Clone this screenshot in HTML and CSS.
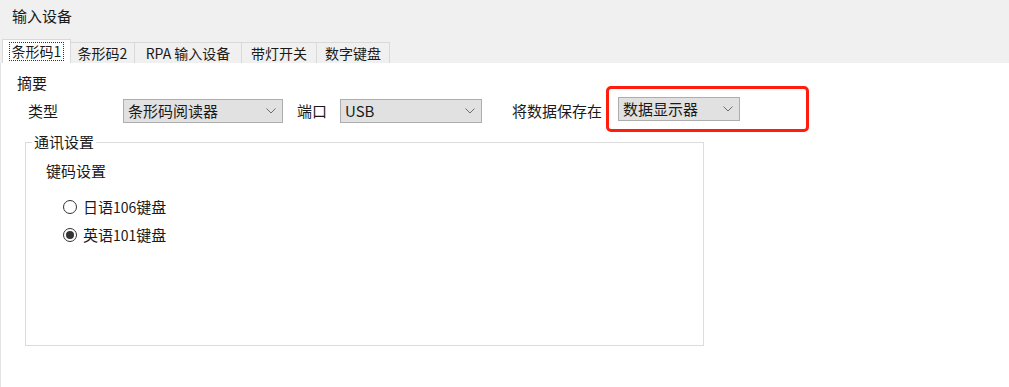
FILE: index.html
```html
<!DOCTYPE html>
<html lang="zh-CN">
<head>
<meta charset="utf-8">
<title>输入设备</title>
<link rel="stylesheet" href="styles.css">
</head>
<body>
<div class="window">
  <div class="header">
    <div class="title">输入设备</div>
    <div class="tabs">
      <div class="tab tab-active t1"><span class="focus">条形码1</span></div>
      <div class="tab t2">条形码2</div>
      <div class="tab t3">RPA 输入设备</div>
      <div class="tab t4">带灯开关</div>
      <div class="tab t5">数字键盘</div>
    </div>
  </div>
  <div class="panel">
    <div class="section-title">摘要</div>
    <div class="row">
      <span class="label label-type">类型</span>
      <div class="combo combo-type">
        <span class="combo-text">条形码阅读器</span>
        <svg class="chev" width="10" height="6" viewBox="0 0 10 6"><path d="M0.5 0.5 L5 5 L9.5 0.5" fill="none" stroke="#6d6d6d" stroke-width="1"/></svg>
      </div>
      <span class="label label-port">端口</span>
      <div class="combo combo-port">
        <span class="combo-text">USB</span>
        <svg class="chev" width="10" height="6" viewBox="0 0 10 6"><path d="M0.5 0.5 L5 5 L9.5 0.5" fill="none" stroke="#6d6d6d" stroke-width="1"/></svg>
      </div>
      <span class="label label-save">将数据保存在</span>
      <div class="highlight">
        <div class="combo combo-save">
          <span class="combo-text">数据显示器</span>
          <svg class="chev" width="10" height="6" viewBox="0 0 10 6"><path d="M0.5 0.5 L5 5 L9.5 0.5" fill="none" stroke="#6d6d6d" stroke-width="1"/></svg>
        </div>
      </div>
    </div>
    <fieldset class="group">
      <legend class="group-title">通讯设置</legend>
      <div class="sub-title">键码设置</div>
      <div class="radio"><span class="radio-circle"></span><span>日语<span class="num">106</span>键盘</span></div>
      <div class="radio radio-second"><span class="radio-circle radio-checked"></span><span>英语<span class="num">101</span>键盘</span></div>
    </fieldset>
  </div>
</div>
</body>
</html>
```

FILE: styles.css
```css
html, body {
  margin: 0;
  padding: 0;
  height: 100%;
}
body {
  font-family: "Noto Sans CJK SC", "Noto Sans", sans-serif;
  font-size: 15px;
  color: #1a1a1a;
  background: #ffffff;
}
.window {
  display: flex;
  flex-direction: column;
  height: 387px;
  width: 1009px;
  overflow: hidden;
}
.header {
  background: #f0f0f0;
  display: flex;
  flex-direction: column;
}
.title {
  height: 39px;
  box-sizing: border-box;
  padding: 6px 0 0 12px;
  line-height: 20px;
}
.tabs {
  display: flex;
  align-items: flex-end;
  height: 24px;
  padding-left: 2px;
}
.tab {
  box-sizing: border-box;
  height: 21px;
  border: 1px solid #d9d9d9;
  border-bottom: none;
  border-left: none;
  background: #f0f0f0;
  display: flex;
  align-items: center;
  justify-content: center;
  font-size: 14px;
  line-height: 18px;
}
.tab-active {
  height: 24px;
  background: #ffffff;
  border-left: 1px solid #d9d9d9;
}
.focus {
  border: 1px dotted #333;
  padding: 0 2px;
  line-height: 17px;
}
.t1 { width: 69px; }
.t2 { width: 64px; }
.t3 { width: 107px; }
.t4 { width: 75px; }
.t5 { width: 73px; }
.panel {
  flex: 1;
  background: #ffffff;
  border-left: 1px solid #e3e3e3;
  display: flex;
  flex-direction: column;
  align-items: flex-start;
}
.section-title {
  margin: 10px 0 0 16px;
  line-height: 20px;
}
.row {
  display: flex;
  align-items: center;
  height: 24px;
  margin-top: 6px;
  padding-left: 27px;
}
.label {
  line-height: 20px;
  white-space: nowrap;
}
.label-type { width: 95px; }
.label-port { margin: 0 13px 0 14px; }
.label-save { margin: 0 4px 0 30px; }
.combo {
  box-sizing: border-box;
  height: 24px;
  border: 1px solid #adadad;
  background: #e1e1e1;
  display: flex;
  align-items: center;
  justify-content: space-between;
  padding: 0 6px 0 4px;
}
.combo-text {
  line-height: 20px;
  white-space: nowrap;
}
.chev { flex: none; }
.combo-type { width: 160px; }
.combo-port { width: 142px; }
.combo-save { width: 122px; }
.highlight {
  border: 3px solid #ff1d0d;
  border-radius: 5px;
  padding: 8px 66px 8px 9px;
  margin: -13px 0 -9px 0;
}
.group {
  box-sizing: border-box;
  width: 679px;
  height: 213px;
  margin: 10px 0 0 24px;
  padding: 0 0 0 6px;
  border: 1px solid #dcdcdc;
  min-inline-size: 0;
}
.group-title {
  padding: 0 2px;
  line-height: 18px;
}
.sub-title {
  margin: 10px 0 0 14px;
  line-height: 20px;
}
.radio {
  display: flex;
  align-items: center;
  margin: 16px 0 0 31px;
  line-height: 20px;
  height: 20px;
}
.radio-second { margin-top: 8px; }
.radio-circle {
  box-sizing: border-box;
  width: 14px;
  height: 14px;
  border: 1px solid #333333;
  border-radius: 50%;
  background: #ffffff;
  margin-right: 6px;
  display: flex;
  align-items: center;
  justify-content: center;
}
.radio-checked::after {
  content: "";
  width: 8px;
  height: 8px;
  border-radius: 50%;
  background: #333333;
}
.num {
  font-size: 14px;
}
```
